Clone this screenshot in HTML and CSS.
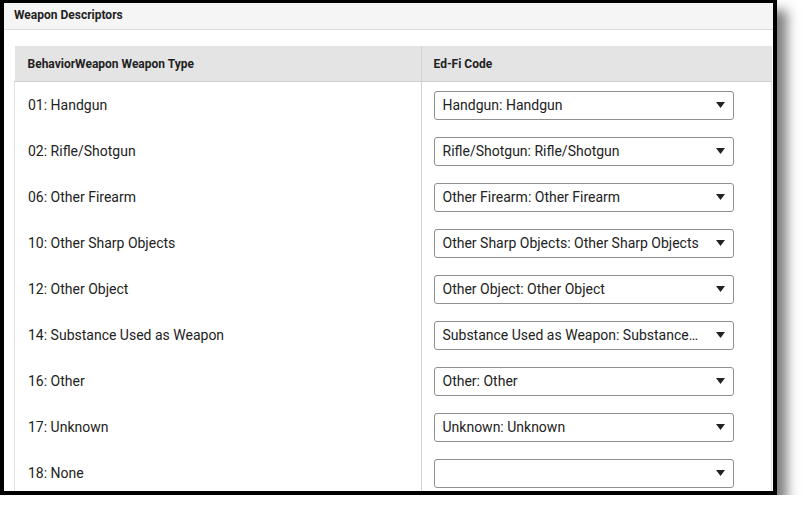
FILE: index.html
```html
<!DOCTYPE html>
<html lang="en">
<head>
  <meta charset="UTF-8" />
  <title>Weapon Descriptors</title>
  <link rel="stylesheet" href="styles.css">
</head>
<body>
  <div class="frame">
    <div class="panel-title">Weapon Descriptors</div>
    <div class="panel-body">
      <table class="mapping">
        <thead>
          <tr>
            <th class="col-type">BehaviorWeapon Weapon Type</th>
            <th class="col-code">Ed-Fi Code</th>
          </tr>
        </thead>
        <tbody>
          <tr><td>01: Handgun</td><td><div class="dropdown"><span>Handgun: Handgun</span><svg width="9" height="6" viewBox="0 0 9 6"><path d="M0 0h9L4.5 6z"/></svg></div></td></tr>
          <tr><td>02: Rifle/Shotgun</td><td><div class="dropdown"><span>Rifle/Shotgun: Rifle/Shotgun</span><svg width="9" height="6" viewBox="0 0 9 6"><path d="M0 0h9L4.5 6z"/></svg></div></td></tr>
          <tr><td>06: Other Firearm</td><td><div class="dropdown"><span>Other Firearm: Other Firearm</span><svg width="9" height="6" viewBox="0 0 9 6"><path d="M0 0h9L4.5 6z"/></svg></div></td></tr>
          <tr><td>10: Other Sharp Objects</td><td><div class="dropdown"><span>Other Sharp Objects: Other Sharp Objects</span><svg width="9" height="6" viewBox="0 0 9 6"><path d="M0 0h9L4.5 6z"/></svg></div></td></tr>
          <tr><td>12: Other Object</td><td><div class="dropdown"><span>Other Object: Other Object</span><svg width="9" height="6" viewBox="0 0 9 6"><path d="M0 0h9L4.5 6z"/></svg></div></td></tr>
          <tr><td>14: Substance Used as Weapon</td><td><div class="dropdown"><span>Substance Used as Weapon: Substance Used as Weapon</span><svg width="9" height="6" viewBox="0 0 9 6"><path d="M0 0h9L4.5 6z"/></svg></div></td></tr>
          <tr><td>16: Other</td><td><div class="dropdown"><span>Other: Other</span><svg width="9" height="6" viewBox="0 0 9 6"><path d="M0 0h9L4.5 6z"/></svg></div></td></tr>
          <tr><td>17: Unknown</td><td><div class="dropdown"><span>Unknown: Unknown</span><svg width="9" height="6" viewBox="0 0 9 6"><path d="M0 0h9L4.5 6z"/></svg></div></td></tr>
          <tr><td>18: None</td><td><div class="dropdown"><span></span><svg width="9" height="6" viewBox="0 0 9 6"><path d="M0 0h9L4.5 6z"/></svg></div></td></tr>
        </tbody>
      </table>
    </div>
  </div>
</body>
</html>
```

FILE: styles.css
```css
body {
  font-family: Roboto, "Liberation Sans", sans-serif;
  margin: 0;
  padding: 0;
  background-color: #fff;
  color: #222;
}

.frame {
  width: 769px;
  height: 488px;
  border: 4px solid #000;
  border-top-width: 3px;
  background-color: #fff;
  overflow: hidden;
  box-shadow: 10px 10px 11px rgba(0, 0, 0, 0.5);
}

.panel-title {
  height: 26px;
  line-height: 24px;
  padding: 0 10px;
  font-size: 12px;
  font-weight: bold;
  color: #222;
  background-color: #f5f5f5;
  border-bottom: 1px solid #dcdcdc;
}

.panel-body {
  padding: 16px 0 0 10px;
}

.mapping {
  border-collapse: collapse;
  width: 758px;
  table-layout: fixed;
  border-right: 1px solid #e2e2e2;
}

.mapping th {
  height: 35px;
  padding: 0 13px;
  text-align: left;
  font-size: 12px;
  font-weight: bold;
  color: #222;
  background-color: #e4e4e4;
  border-bottom: 1px solid #cfcfcf;
}

.mapping .col-type {
  width: 380px;
  border-right: 1px solid #d2d2d2;
}

.mapping .col-code {
  padding-left: 12px;
}

.mapping td {
  height: 46px;
  padding: 0 13px;
  font-size: 14px;
  color: #222;
  vertical-align: middle;
  border-left: 1px solid #e2e2e2;
}

.mapping td + td {
  padding-left: 12px;
  border-left: 1px solid #d2d2d2;
}

.dropdown {
  display: flex;
  align-items: center;
  width: 300px;
  height: 29px;
  box-sizing: border-box;
  padding: 0 8px;
  border: 1px solid #8f8f8f;
  border-radius: 3px;
  background-color: #fff;
  font-size: 14px;
  color: #222;
}

.dropdown span {
  flex: 1;
  white-space: nowrap;
  overflow: hidden;
  text-overflow: ellipsis;
  padding-right: 14px;
}

.dropdown svg {
  fill: #222;
  flex-shrink: 0;
}
```
